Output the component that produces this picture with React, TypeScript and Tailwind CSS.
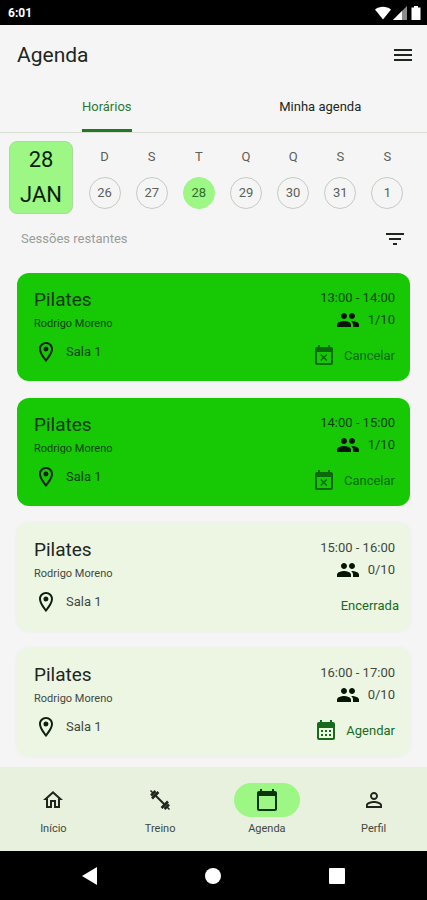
import { useState } from "react";
import type { ReactNode } from "react";

type IconProps = { d: string; className?: string };

function Icon({ d, className = "size-6" }: IconProps) {
  return (
    <svg viewBox="0 0 24 24" fill="currentColor" aria-hidden="true" className={`shrink-0 ${className}`}>
      <path d={d} />
    </svg>
  );
}

const icons = {
  menu: "M3 18h18v-2H3v2zm0-5h18v-2H3v2zm0-7v2h18V6H3z",
  filter: "M10 18h4v-2h-4v2zM3 6v2h18V6H3zm3 7h12v-2H6v2z",
  pin: "M12 2C8.13 2 5 5.13 5 9c0 5.25 7 13 7 13s7-7.75 7-13c0-3.87-3.13-7-7-7zM7 9c0-2.76 2.24-5 5-5s5 2.24 5 5c0 2.88-2.88 7.19-5 9.88C9.92 16.21 7 11.85 7 9zm5-2.5a2.5 2.5 0 1 0 0 5 2.5 2.5 0 0 0 0-5z",
  people:
    "M16 11c1.66 0 2.99-1.34 2.99-3S17.66 5 16 5s-3 1.34-3 3 1.34 3 3 3zm-8 0c1.66 0 2.99-1.34 2.99-3S9.66 5 8 5 5 6.34 5 8s1.34 3 3 3zm0 2c-2.33 0-7 1.17-7 3.5V19h14v-2.5c0-2.33-4.67-3.5-7-3.5zm8 0c-.29 0-.62.02-.97.05 1.16.84 1.97 1.97 1.97 3.45V19h6v-2.5c0-2.33-4.67-3.5-7-3.5z",
  busy: "M9.31 17l2.44-2.44L14.19 17l1.06-1.06-2.44-2.44 2.44-2.44L14.19 10l-2.44 2.44L9.31 10l-1.06 1.06 2.44 2.44-2.44 2.44L9.31 17zM19 3h-1V1h-2v2H8V1H6v2H5c-1.11 0-1.99.9-1.99 2L3 19c0 1.1.89 2 2 2h14c1.1 0 2-.9 2-2V5c0-1.1-.9-2-2-2zm0 16H5V8h14v11z",
  month:
    "M19 3h-1V1h-2v2H8V1H6v2H5c-1.11 0-1.99.9-1.99 2L3 19a2 2 0 0 0 2 2h14c1.1 0 2-.9 2-2V5c0-1.1-.9-2-2-2zm0 16H5V9h14v10zM9 13H7v-2h2v2zm4 0h-2v-2h2v2zm4 0h-2v-2h2v2zm-8 4H7v-2h2v2zm4 0h-2v-2h2v2zm4 0h-2v-2h2v2z",
  home: "M12 5.69l5 4.5V18h-2v-6H9v6H7v-7.81l5-4.5M12 3L2 12h3v8h6v-6h2v6h6v-8h3L12 3z",
  calendar:
    "M20 3h-1V1h-2v2H7V1H5v2H4c-1.1 0-2 .9-2 2v16c0 1.1.9 2 2 2h16c1.1 0 2-.9 2-2V5c0-1.1-.9-2-2-2zm0 18H4V8h16v13z",
  person:
    "M12 5.9a2.1 2.1 0 1 1 0 4.2 2.1 2.1 0 0 1 0-4.2m0 9c2.97 0 6.1 1.46 6.1 2.1v1.1H5.9V17c0-.64 3.13-2.1 6.1-2.1M12 4C9.79 4 8 5.79 8 8s1.79 4 4 4 4-1.79 4-4-1.79-4-4-4zm0 9c-2.67 0-8 1.34-8 4v3h16v-3c0-2.66-5.33-4-8-4z",
};

function Dumbbell() {
  return (
    <svg viewBox="0 0 24 24" fill="none" stroke="currentColor" aria-hidden="true" className="size-6">
      <path d="M7 7l10 10" strokeWidth="2" />
      <path d="M4 10.5L10.5 4M3 7.5L7.5 3M13.5 20L20 13.5M16.500 21L21 16.500" strokeWidth="2.500" />
      <path d="M2.500 2.500l3 3M18.500 18.500l3 3" strokeWidth="1.500" />
    </svg>
  );
}

const days = [
  ["D", 26],
  ["S", 27],
  ["T", 28],
  ["Q", 29],
  ["Q", 30],
  ["S", 31],
  ["S", 1],
] as const;

type Status = "booked" | "closed" | "open";
type Session = { time: string; count: string; status: Status };

const sessions: Session[] = [
  { time: "13:00 - 14:00", count: "1/10", status: "booked" },
  { time: "14:00 - 15:00", count: "1/10", status: "booked" },
  { time: "15:00 - 16:00", count: "0/10", status: "closed" },
  { time: "16:00 - 17:00", count: "0/10", status: "open" },
];

function SessionAction({ status }: { status: Status }) {
  if (status === "closed") {
    return <span className="-mr-1 flex h-6 items-center text-[#176b1c]">Encerrada</span>;
  }
  if (status === "booked") {
    return (
      <button className="flex h-6 items-center gap-2 text-[#0a6a0b]">
        <Icon d={icons.busy} />
        Cancelar
      </button>
    );
  }
  return (
    <button className="flex h-6 items-center gap-2 text-[#176b1c]">
      <Icon d={icons.month} />
      Agendar
    </button>
  );
}

function SessionCard({ session }: { session: Session }) {
  const booked = session.status === "booked";
  return (
    <li
      className={`flex justify-between rounded-xl pt-[15px] pr-[15px] pb-[13px] pl-[17px] text-[13px] ${
        booked ? "bg-[#17c905] text-[#0a430a]" : "bg-[#ecf6e3] text-[#42483f] shadow-[0_0_4px_#e9eee6]"
      }`}
    >
      <div>
        <h2 className={`text-[19px] leading-6 ${booked ? "text-[#073a07]" : "text-[#20261e]"}`}>Pilates</h2>
        <p className="mt-1 text-[11px] leading-4">Rodrigo Moreno</p>
        <p className="mt-2 flex h-6 items-center gap-2">
          <Icon d={icons.pin} className="size-6 text-[#10200f]" />
          Sala 1
        </p>
      </div>
      <div className="flex flex-col items-end">
        <p className="leading-5">{session.time}</p>
        <p className="mb-3 flex h-6 items-center gap-2">
          <Icon d={icons.people} className="size-6 text-[#071507]" />
          {session.count}
        </p>
        <SessionAction status={session.status} />
      </div>
    </li>
  );
}

function NavItem({ label, active = false, children }: { label: string; active?: boolean; children: ReactNode }) {
  return (
    <a href="#" aria-current={active ? "page" : undefined} className="flex flex-1 flex-col items-center gap-1">
      <span
        className={`flex h-[34px] w-[66px] items-center justify-center rounded-full ${
          active ? "bg-[#9cf785] text-[#0b350c]" : "text-[#20261e]"
        }`}
      >
        {children}
      </span>
      <span className="text-[11px] leading-4 text-[#42483f]">{label}</span>
    </a>
  );
}

export default function App() {
  const [tab, setTab] = useState(0);
  const [selected, setSelected] = useState(28);

  return (
    <div className="flex min-h-screen flex-col bg-[#f5f5f5] font-[Roboto,sans-serif] text-[#20261e]">
      <div className="flex h-[25px] shrink-0 items-center justify-between bg-black pr-1 pl-2 text-white">
        <span className="text-xs font-bold">6:01</span>
        <div className="flex items-center gap-[2px]">
          <svg viewBox="0 0 16 14" fill="currentColor" className="h-[14px] w-4" aria-hidden="true">
            <path d="M0 3.5C4.5-.3 11.5-.3 16 3.5L8 13.5z" />
          </svg>
          <svg viewBox="0 0 14 14" fill="currentColor" className="size-[14px]" aria-hidden="true">
            <path d="M0 14L14 0v14z" opacity=".55" />
            <path d="M0 14L9 5v9z" />
          </svg>
          <svg viewBox="0 0 14 14" fill="currentColor" className="size-[14px]" aria-hidden="true">
            <path d="M5 0h4v1.5h2.5V14h-9V1.5H5z" />
          </svg>
        </div>
      </div>

      <header className="flex h-[60px] shrink-0 items-center justify-between pr-3 pl-[17px]">
        <h1 className="text-[21px] leading-7">Agenda</h1>
        <button aria-label="Menu">
          <Icon d={icons.menu} />
        </button>
      </header>

      <div role="tablist" className="flex h-12 shrink-0 border-b border-[#dadfd5] text-[13px]">
        {["Horários", "Minha agenda"].map((label, i) => (
          <button
            key={label}
            role="tab"
            aria-selected={tab === i}
            onClick={() => setTab(i)}
            className="flex flex-1 justify-center"
          >
            <span
              className={`flex h-full items-center border-b-3 ${
                tab === i ? "border-[#1f7a24] text-[#2b7a2f]" : "border-transparent"
              }`}
            >
              {label}
            </span>
          </button>
        ))}
      </div>

      <section className="flex shrink-0 items-start justify-between pt-2 pr-4 pl-[9px]">
        <div className="flex h-[73px] w-16 flex-col items-center justify-between rounded-lg border border-[#a8dc98] bg-[#9cf785] py-1 text-[22px] leading-7 text-[#0b1f0b]">
          <span>28</span>
          <span>JAN</span>
        </div>
        <div className="flex flex-1 justify-between pt-2 pl-2 text-[13px] text-[#5b6058]">
          {days.map(([letter, day]) => (
            <div key={day} className="flex flex-1 flex-col items-center gap-3">
              <span className="leading-4">{letter}</span>
              <button
                onClick={() => setSelected(day)}
                aria-pressed={selected === day}
                className={`flex size-8 items-center justify-center rounded-full border ${
                  selected === day ? "border-[#9cf785] bg-[#9cf785] text-[#2f6b2c]" : "border-[#c6cbc0]"
                }`}
              >
                {day}
              </button>
            </div>
          ))}
        </div>
      </section>

      <div className="mt-[13px] flex h-6 shrink-0 items-center justify-between pr-5 pl-[21px]">
        <span className="text-[13px] text-[#9a9d98]">Sessões restantes</span>
        <button aria-label="Filtrar">
          <Icon d={icons.filter} />
        </button>
      </div>

      <ul className="mt-[22px] flex flex-1 flex-col gap-[17px] px-[17px] pb-[11px]">
        {sessions.map((session) => (
          <SessionCard key={session.time} session={session} />
        ))}
      </ul>

      <nav className="flex h-[84px] shrink-0 bg-[#e8f1dd] pt-4">
        <NavItem label="Início">
          <Icon d={icons.home} />
        </NavItem>
        <NavItem label="Treino">
          <Dumbbell />
        </NavItem>
        <NavItem label="Agenda" active>
          <Icon d={icons.calendar} />
        </NavItem>
        <NavItem label="Perfil">
          <Icon d={icons.person} />
        </NavItem>
      </nav>

      <div className="flex h-[49px] shrink-0 items-center justify-around bg-black px-7 text-white">
        <button aria-label="Voltar">
          <svg viewBox="0 0 18 18" fill="currentColor" className="size-[18px]">
            <path d="M1 9L16 0v18z" />
          </svg>
        </button>
        <button aria-label="Tela inicial">
          <svg viewBox="0 0 18 18" fill="currentColor" className="size-[18px]">
            <circle cx="9" cy="9" r="8" />
          </svg>
        </button>
        <button aria-label="Recentes">
          <svg viewBox="0 0 18 18" fill="currentColor" className="size-[18px]">
            <rect x="1" y="1" width="16" height="16" rx="1" />
          </svg>
        </button>
      </div>
    </div>
  );
}
